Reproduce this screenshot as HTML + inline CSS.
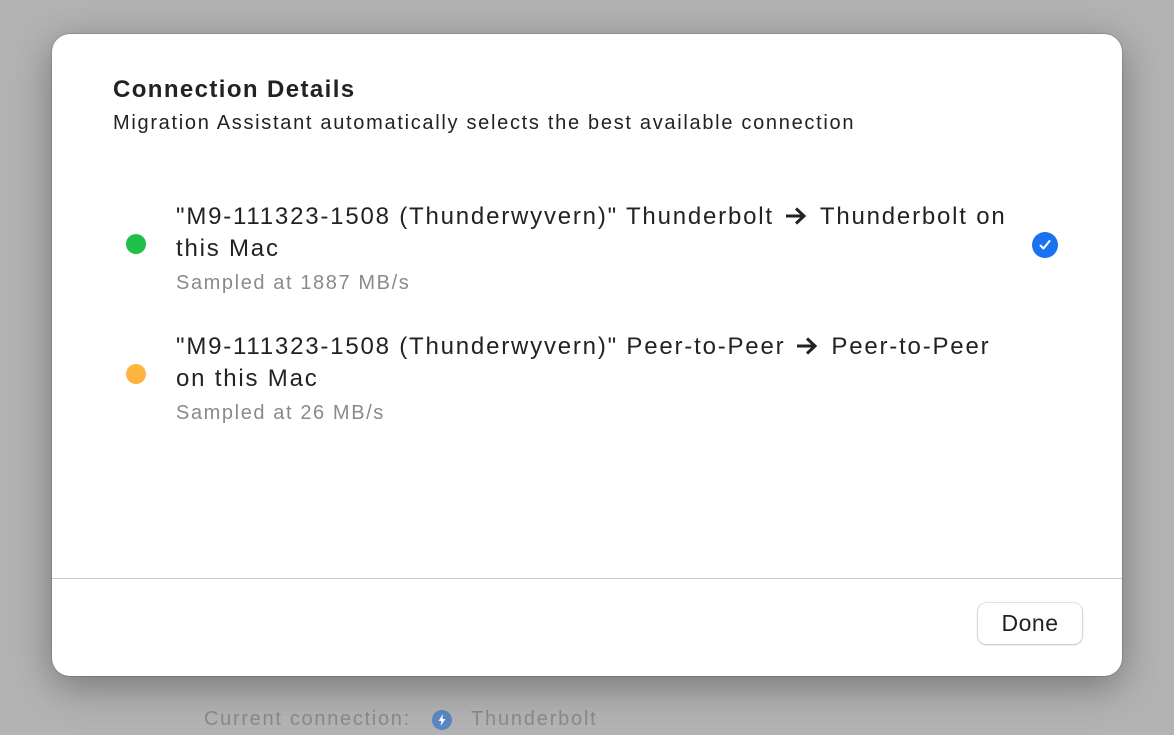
<!DOCTYPE html>
<html><head><meta charset="utf-8"><style>
html,body{margin:0;padding:0;}
body{width:1174px;height:732px;background:#b3b3b3;position:relative;overflow:hidden;font-family:"Liberation Sans",sans-serif;}
.dlg{position:absolute;left:52px;top:34px;width:1070px;height:642px;background:#fff;border-radius:18px;box-shadow:0 10px 40px rgba(0,0,0,0.35),0 0 0 1px rgba(0,0,0,0.12);}
.t{position:absolute;white-space:nowrap;color:#222;}
.dot{position:absolute;width:20px;height:20px;border-radius:50%;}
.div{position:absolute;left:0;right:0;top:544px;height:1px;background:#c8c8c8;}
.btn{position:absolute;left:926px;top:569px;width:104px;height:41px;border-radius:8px;background:#fff;box-shadow:0 0.5px 2px rgba(0,0,0,0.3),0 0 0 0.5px rgba(0,0,0,0.12);font-size:23px;color:#222;text-align:center;line-height:41px;letter-spacing:0.5px;}
.arr{display:inline-block;vertical-align:-2px;margin:0 12px 0 10px;}
</style></head><body>
<div class="t" style="left:204px;top:708px;font-size:20px;color:#8a8a8a;letter-spacing:1.7px;">Current connection:</div>
<div style="position:absolute;left:432px;top:710px;width:20px;height:20px;border-radius:50%;background:#5b87c4;"><svg width="20" height="20" viewBox="0 0 20 20"><path d="M11 4 L6.5 11 H9.5 L8.5 16 L13.5 9 H10.5 Z" fill="#fff"/></svg></div>
<div class="t" style="left:471px;top:708px;font-size:20px;color:#8a8a8a;letter-spacing:1.8px;">Thunderbolt</div>
<div class="dlg">
<div class="t" style="left:61px;top:42px;font-size:24px;font-weight:bold;letter-spacing:1.4px;">Connection Details</div>
<div class="t" style="left:61px;top:78px;font-size:20px;letter-spacing:1.7px;">Migration Assistant automatically selects the best available connection</div>
<div class="dot" style="left:74px;top:200px;background:#1ec04a;"></div>
<div class="t" style="left:124px;top:167px;font-size:24px;line-height:32px;letter-spacing:1.8px;">"M9-111323-1508 (Thunderwyvern)" Thunderbolt<svg class="arr" width="24" height="20" viewBox="0 0 24 20"><path d="M2 10 H20 M12 2.5 L20 10 L12 17.5" stroke="#222" stroke-width="3" fill="none"/></svg>Thunderbolt on<br>this Mac</div>
<div class="t" style="left:124px;top:238px;font-size:20px;color:#8a8a8a;letter-spacing:1.6px;">Sampled at 1887 MB/s</div>
<div style="position:absolute;left:980px;top:198px;width:26px;height:26px;border-radius:50%;background:#1a72f0;"><svg width="26" height="26" viewBox="0 0 26 26"><path d="M8.5 13.5 L11.5 16.5 L17.5 9" stroke="#fff" stroke-width="2" fill="none" stroke-linecap="round" stroke-linejoin="round"/></svg></div>
<div class="dot" style="left:74px;top:330px;background:#fdb440;"></div>
<div class="t" style="left:124px;top:297px;font-size:24px;line-height:32px;letter-spacing:1.8px;">"M9-111323-1508 (Thunderwyvern)" Peer-to-Peer<svg class="arr" width="24" height="20" viewBox="0 0 24 20"><path d="M2 10 H20 M12 2.5 L20 10 L12 17.5" stroke="#222" stroke-width="3" fill="none"/></svg>Peer-to-Peer<br>on this Mac</div>
<div class="t" style="left:124px;top:368px;font-size:20px;color:#8a8a8a;letter-spacing:1.6px;">Sampled at 26 MB/s</div>
<div class="div"></div>
<div class="btn">Done</div>
</div>
</body></html>
